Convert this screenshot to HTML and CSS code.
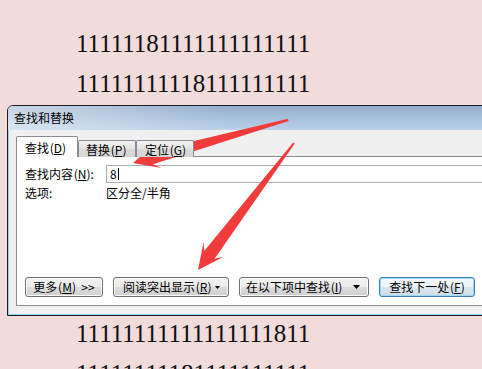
FILE: index.html
```html
<!DOCTYPE html>
<html lang="zh-CN">
<head>
<meta charset="utf-8">
<title>查找和替换</title>
<link rel="stylesheet" href="styles.css">
</head>
<body>
<div class="doc">
  <p class="line">11111181111111111111</p>
  <p class="line">11111111118111111111</p>
  <p class="line gap">11111111111111111811</p>
  <p class="line">11111111181111111111</p>
</div>

<div class="dialog">
  <div class="titlebar">查找和替换</div>
  <div class="dlg-body">
    <div class="tabs">
      <div class="tab tab-active">查找&#8202;(<u>D</u>)</div>
      <div class="tab tab-2">替换&#8202;(<u>P</u>)</div>
      <div class="tab tab-3">定位&#8202;(<u>G</u>)</div>
    </div>
    <div class="panel">
      <div class="row">
        <span class="label">查找内容&#8202;(<u>N</u>):</span>
        <div class="input"><span>8</span><span class="caret"></span></div>
      </div>
      <div class="row row-opt">
        <span class="label">选项:</span>
        <span>区分全/半角</span>
      </div>
      <div class="buttons">
        <div class="btn btn-more">更多&#8202;(<u>M</u>)&nbsp;&nbsp;&gt;&gt;</div>
        <div class="btn btn-read">阅读突出显示&#8202;(<u>R</u>)<svg class="tri-s" width="5" height="3" viewBox="0 0 5 3"><path d="M0 0H5L2.5 3Z" fill="#000"/></svg></div>
        <div class="btn btn-in">在以下项中查找&#8202;(<u>I</u>)<svg class="tri-l" width="7" height="4" viewBox="0 0 7 4"><path d="M0 0H7L3.5 4Z" fill="#000"/></svg></div>
        <div class="btn btn-next">查找下一处&#8202;(<u>F</u>)</div>
      </div>
    </div>
  </div>
</div>

<svg class="arrows" width="482" height="369" viewBox="0 0 482 369">
  <polygon points="288,118.8 149.6,151.6 154.7,144.1 133,163 161.3,168.1 153,164.2 288.6,121" fill="#f23c3c"/>
  <polygon points="293.2,142.6 204.2,250.9 203.6,241.7 198,270 223.6,256.7 214.6,258.7 294.8,143.6" fill="#f23c3c"/>
</svg>
</body>
</html>
```

FILE: styles.css
```css
html, body {
  margin: 0;
  height: 100%;
  overflow: hidden;
}

body {
  background: #f1dbdb;
  position: relative;
  font-family: "Noto Sans CJK SC", sans-serif;
}

.doc {
  padding: 24px 0 0 76px;
  font-family: "Liberation Serif", serif;
  font-size: 25px;
  color: #111;
}

.line {
  margin: 0;
  height: 40px;
  line-height: 40px;
  white-space: nowrap;
}

.line.gap {
  margin-top: 210px;
}

.dialog {
  position: absolute;
  left: 7px;
  top: 105px;
  width: 490px;
  height: 211px;
  box-sizing: border-box;
  border: 1px solid #1e1e1e;
  border-radius: 6px 6px 0 0;
  background: #f0f0f0;
  box-shadow: inset 1px -1px 0 #8ed3ef;
  display: flex;
  flex-direction: column;
  overflow: hidden;
  font-size: 12px;
  color: #000;
}

.titlebar {
  height: 24px;
  flex: none;
  display: flex;
  align-items: center;
  padding-left: 6px;
  line-height: 1;
  background:
    linear-gradient(90deg, rgba(236, 241, 247, 0.6), rgba(236, 241, 247, 0) 45%),
    linear-gradient(180deg, #92adcc, #bcd2e9);
}

.dlg-body {
  flex: 1;
  display: flex;
  flex-direction: column;
  padding: 6px 0 9px 8px;
  min-height: 0;
}

.tabs {
  display: flex;
  align-items: flex-end;
  height: 21px;
  margin-bottom: -1px;
  position: relative;
  z-index: 1;
  flex: none;
}

.tab {
  box-sizing: border-box;
  border: 1px solid #898c95;
  border-bottom: none;
  display: flex;
  align-items: center;
  padding-left: 7px;
  line-height: 1;
  white-space: nowrap;
}

.tab-active {
  width: 62px;
  height: 21px;
  padding-left: 8px;
  padding-top: 2px;
  background: #fff;
  border-radius: 2px 2px 0 0;
}

.tab-2,
.tab-3 {
  height: 17px;
  padding-top: 1px;
  background: linear-gradient(180deg, #f2f2f2, #e3e3e3 50%, #dbdbdb 50%, #d5d5d5);
  border-radius: 2px 2px 0 0;
}

.tab-2 {
  width: 58px;
}

.tab-3 {
  width: 58px;
  padding-left: 8px;
}

.panel {
  flex: 1;
  background: #fff;
  border: 1px solid #898c95;
  border-right: none;
  display: flex;
  flex-direction: column;
  padding: 8px 0 8px 8px;
  min-height: 0;
}

.row {
  display: flex;
  align-items: center;
  height: 18px;
  line-height: 1;
}

.row-opt {
  margin-top: 2px;
  height: 16px;
}

.label {
  width: 81px;
  flex: none;
}

.input {
  flex: 1;
  height: 18px;
  box-sizing: border-box;
  border: 1px solid #a9abb2;
  border-right: none;
  display: flex;
  align-items: center;
  padding-left: 3px;
}

.caret {
  display: inline-block;
  width: 1px;
  height: 12px;
  background: #000;
  margin-left: 1px;
}

.buttons {
  margin-top: auto;
  display: flex;
  gap: 10px;
}

.btn {
  height: 20px;
  box-sizing: border-box;
  border: 1px solid #707070;
  border-radius: 3px;
  background: linear-gradient(180deg, #f2f2f2 0%, #ebebeb 50%, #dddddd 50%, #cfcfcf 100%);
  box-shadow: inset 0 0 0 1px #fbfbfb;
  display: flex;
  align-items: center;
  justify-content: center;
  line-height: 1;
  white-space: nowrap;
  flex: none;
}

.btn-more {
  width: 78px;
}

.btn-read {
  width: 116px;
  justify-content: flex-start;
  padding-left: 9px;
}

.btn-in {
  width: 130px;
  justify-content: flex-start;
  padding-left: 6px;
}

.btn-next {
  width: 96px;
  border-color: #3c7fb1;
  box-shadow: inset 0 0 0 1px #97dcf7;
  background: linear-gradient(180deg, #f4f9fc 0%, #eaf3f9 50%, #dbe7f0 50%, #d0dde8 100%);
}

.tri-s {
  margin-left: 3px;
}

.tri-l {
  margin-left: auto;
  margin-right: 8px;
}

u {
  text-decoration: underline;
  text-underline-offset: 1px;
}

.arrows {
  position: absolute;
  left: 0;
  top: 0;
  pointer-events: none;
}
```
